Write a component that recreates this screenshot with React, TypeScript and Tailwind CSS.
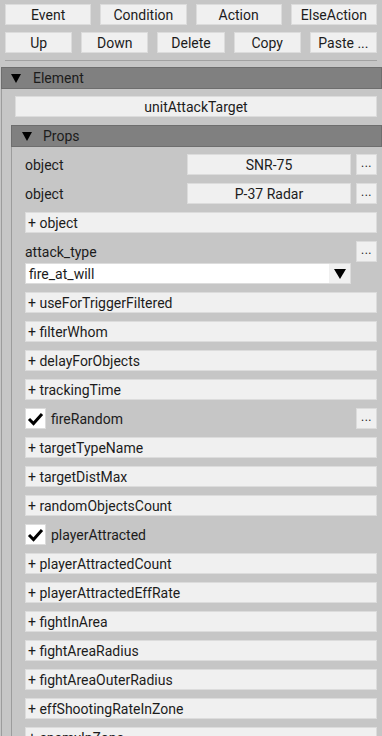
import React from "react";

const Btn = ({ children, className = "" }: { children?: React.ReactNode; className?: string }) => (
  <div className={"h-[21px] flex items-center justify-center bg-[#f0f0f0] border border-[#dcdcdc] " + className}>
    {children}
  </div>
);

const Dots = () => (
  <div className="w-[21px] h-[21px] shrink-0 flex items-end justify-center pb-[5px] bg-[#f0f0f0] border border-[#dcdcdc] text-[12px] leading-none tracking-[0.5px]">
    ...
  </div>
);

const Tri = ({ className = "" }: { className?: string }) => (
  <svg width="10" height="9" viewBox="0 0 10 9" className={className}>
    <polygon points="0,0 10,0 5,9" fill="#000" />
  </svg>
);

const Plus = ({ name }: { name: string }) => (
  <div className="h-[21px] flex items-center pl-[2px] bg-[#f0f0f0] border border-[#dcdcdc]">+ {name}</div>
);

const Check = ({ name, dots }: { name: string; dots?: boolean }) => (
  <div className="h-[21px] flex items-center">
    <div className="w-[21px] h-[21px] bg-white border border-[#dcdcdc] flex items-center justify-center">
      <svg width="19" height="19" viewBox="0 0 19 19">
        <path d="M3 10 L7.5 14.5 L16 5" fill="none" stroke="#000" strokeWidth="3" />
      </svg>
    </div>
    <span className="ml-[5px] flex-1">{name}</span>
    {dots && <Dots />}
  </div>
);

const ObjRow = ({ value }: { value: string }) => (
  <div className="h-[21px] flex items-center">
    <span className="flex-1">object</span>
    <Btn className="flex-1">{value}</Btn>
    <div className="ml-[5px]">
      <Dots />
    </div>
  </div>
);

export default function App() {
  return (
    <div className="w-[382px] h-[736px] overflow-hidden bg-[#c6c6c6] text-[14px] leading-none text-[#1c1c1c] font-['Roboto',sans-serif]">
      <div className="pt-[4px] px-[5px]">
        <div className="flex gap-[9px]">
          <Btn className="flex-1">Event</Btn>
          <Btn className="flex-1">Condition</Btn>
          <Btn className="flex-1">Action</Btn>
          <Btn className="flex-1">ElseAction</Btn>
        </div>
        <div className="flex gap-[9px] mt-[7px]">
          <Btn className="flex-1">Up</Btn>
          <Btn className="flex-1">Down</Btn>
          <Btn className="flex-1">Delete</Btn>
          <Btn className="flex-1">Copy</Btn>
          <Btn className="flex-1">Paste ...</Btn>
        </div>
        <div className="h-px bg-[#a2a2a2] mt-[7px]" />
      </div>
      <div className="mt-[6px] ml-[1px]">
        <div className="h-[22px] bg-[#808080] border border-[#6e6e6e] flex items-center">
          <Tri className="ml-[9px]" />
          <span className="ml-[12px]">Element</span>
        </div>
        <div className="border-l border-[#9c9c9c] pt-[7px] pb-[20px]">
          <Btn className="ml-[13px] mr-[5px]">unitAttackTarget</Btn>
          <div className="mt-[8px] ml-[9px]">
            <div className="h-[22px] bg-[#808080] border border-[#6e6e6e] flex items-center">
              <Tri className="ml-[10px]" />
              <span className="ml-[11px]">Props</span>
            </div>
            <div className="border-l border-[#9c9c9c] pt-[7px] pl-[13px] pr-[5px] flex flex-col gap-[8px]">
              <ObjRow value="SNR-75" />
              <ObjRow value="P-37 Radar" />
              <Plus name="object" />
              <div className="flex flex-col gap-[1px]">
                <div className="h-[21px] flex items-center">
                  <span className="flex-1">attack_type</span>
                  <Dots />
                </div>
                <div className="h-[21px] w-[326px] flex bg-white border border-[#dcdcdc]">
                  <div className="flex-1 flex items-center pl-[3px]">fire_at_will</div>
                  <div className="w-[21px] flex items-center justify-center bg-[#f0f0f0]">
                    <svg width="12" height="10" viewBox="0 0 12 10">
                      <polygon points="0,0 12,0 6,10" fill="#000" />
                    </svg>
                  </div>
                </div>
              </div>
              <Plus name="useForTriggerFiltered" />
              <Plus name="filterWhom" />
              <Plus name="delayForObjects" />
              <Plus name="trackingTime" />
              <Check name="fireRandom" dots />
              <Plus name="targetTypeName" />
              <Plus name="targetDistMax" />
              <Plus name="randomObjectsCount" />
              <Check name="playerAttracted" />
              <Plus name="playerAttractedCount" />
              <Plus name="playerAttractedEffRate" />
              <Plus name="fightInArea" />
              <Plus name="fightAreaRadius" />
              <Plus name="fightAreaOuterRadius" />
              <Plus name="effShootingRateInZone" />
              <Plus name="enemyInZone" />
            </div>
          </div>
        </div>
      </div>
    </div>
  );
}
